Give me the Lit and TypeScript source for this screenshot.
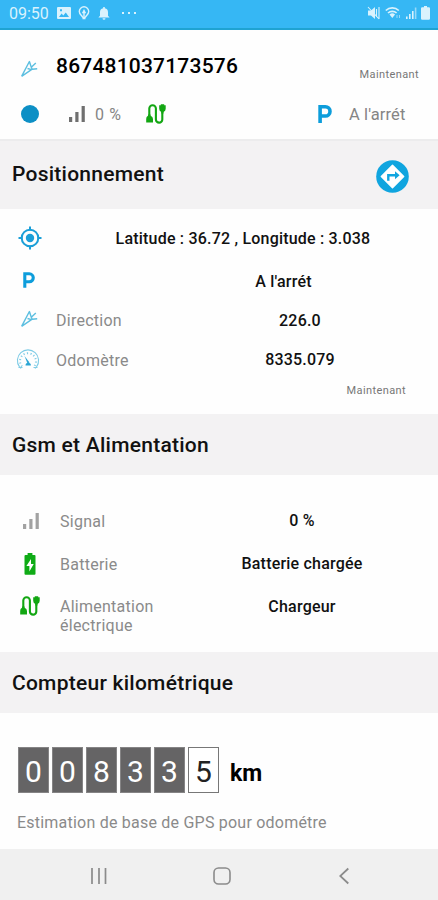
import { LitElement, html, css, svg, nothing } from "lit";
import { customElement, property } from "lit/decorators.js";

const icons: Record<string, { box: string; body: unknown }> = {
  arrow: {
    box: "0 0 18 18",
    body: svg`<path d="M1.600 16.400 9.400 1.500 11.300 7.300 15.800 3M11.300 7.300 12.200 9.200 17.200 8.800M12.200 9.200 1.600 16.400M11.500 9.700 7.500 8.500" fill="none" stroke="#5dbfe0" stroke-width="1.400" stroke-linejoin="round"/>`,
  },
  signal: {
    box: "0 0 18 18",
    body: svg`<path d="M1 12h3.200v5H1zM7.300 7h3.200v10H7.300zM13.600 1h3.200v16h-3.200z" fill="currentColor"/>`,
  },
  plug: {
    box: "0 0 20 20",
    body: svg`<path d="M3.300 14V4.600a3 3 0 0 1 6.600 0V15.400a3.200 3.200 0 0 0 6.400 0V6" fill="none" stroke="#12a612" stroke-width="2.100"/><path d="M2 10.500h2.600v1.300a3.400 3.400 0 0 1 2.400 3.200v3.500H.200V15A3.400 3.400 0 0 1 2 11.800zM13.800 1.300H14.800V.3h3.400v1h1.500v3.500a3.400 3.400 0 0 1-2.200 3.200v1.500h-2.200V8A3.400 3.400 0 0 1 13.200 4.800V1.300z" fill="#12a612"/>`,
  },
  parking: {
    box: "0 0 14 18",
    body: svg`<path d="M2.100 18V1.800H7.400a4.600 4.600 0 0 1 0 9.200H2.100" fill="none" stroke="#0d9ddb" stroke-width="3.600"/>`,
  },
  target: {
    box: "0 0 24 24",
    body: svg`<circle cx="12" cy="12" r="8.300" fill="none" stroke="#1b9fd8" stroke-width="2"/><circle cx="12" cy="12" r="4.200" fill="#1b9fd8"/><path d="M12 .5v4M12 19.500v4M.5 12h4M19.500 12h4" stroke="#1b9fd8" stroke-width="2"/>`,
  },
  gauge: {
    box: "0 0 24 22",
    body: svg`<path d="M5 20.500 3.500 18.800A10.600 10.600 0 1 1 20.500 18.800L19 20.500" fill="none" stroke="#7fcce6" stroke-width="1.100"/><path d="M6 18.500A8 8 0 1 1 18 18.500" fill="none" stroke="#7fcce6" stroke-width="2" stroke-dasharray="1.100 2.300"/><path d="M8.500 8 13.500 14.500 11.500 15.500z" fill="#2ba5d4"/><path d="M9.500 17.500a2.700 2.700 0 0 1 5.400 0z" fill="#2ba5d4"/><path d="M2.500 19.500h4M17.500 19.500h4" stroke="#7fcce6"/>`,
  },
  battery: {
    box: "0 0 12 22",
    body: svg`<path d="M3.600 0h4.800v2H10.500a1 1 0 0 1 1 1V20.800a1 1 0 0 1-1 1h-9a1 1 0 0 1-1-1V3a1 1 0 0 1 1-1H3.600z" fill="#0fab16"/><path d="M7 6 2.400 13H5.400V18.500L9.700 11H7z" fill="#fff"/>`,
  },
  directions: {
    box: "0 0 33 33",
    body: svg`<circle cx="16.500" cy="16.500" r="16.300" fill="#10a5df"/><path d="M16.500 5.300 27.700 16.500 16.500 27.700 5.300 16.500z" fill="#fff" stroke="#fff" stroke-width="1.400" stroke-linejoin="round"/><path d="M12.300 20.800V15.200H20" fill="none" stroke="#10a5df" stroke-width="2.400"/><path d="M19 11.200 23.600 15.200 19 19.200z" fill="#10a5df"/>`,
  },
  photo: {
    box: "0 0 14 12",
    body: svg`<path fill-rule="evenodd" d="M1 0h12a1 1 0 0 1 1 1v10a1 1 0 0 1-1 1H1a1 1 0 0 1-1-1V1a1 1 0 0 1 1-1zM2 10h10L8.800 5.500 6.300 8.500 4.600 6.600zM3 2.200v2h2v-2z" fill="currentColor"/>`,
  },
  pin: {
    box: "0 0 12 14",
    body: svg`<path d="M6 .8a4.700 4.700 0 0 1 4.700 4.700C10.700 8.300 8.300 9.200 7.500 11h-3C3.700 9.200 1.300 8.300 1.300 5.500A4.700 4.700 0 0 1 6 .8z" fill="none" stroke="currentColor" stroke-width="1.400"/><path d="M6 3 8.200 7.200H6.700V10H5.300V7.200H3.800zM4.500 11h3v2.200h-3z" fill="currentColor"/>`,
  },
  bell: {
    box: "0 0 12 13",
    body: svg`<path d="M5.200 0h1.600v1.200A4 4 0 0 1 10 5.200V8.700L11.600 10.500H.4L2 8.700V5.200a4 4 0 0 1 3.200-4zM4.500 11.300h3a1.500 1.500 0 0 1-3 0z" fill="currentColor"/>`,
  },
  dots: {
    box: "0 0 16 4",
    body: svg`<path d="M1 1h2v2H1zM7 1h2v2H7zM13 1h2v2h-2z" fill="currentColor"/>`,
  },
  mute: {
    box: "0 0 14 14",
    body: svg`<path d="M1 4.500h3L8 1v12L4 9.500H1z" fill="currentColor"/><path d="M1 1 12 13M9.500 3v8M12 1v12" stroke="currentColor" stroke-width="1.100" fill="none"/>`,
  },
  wifi: {
    box: "0 0 16 14",
    body: svg`<path d="M.8 4.500a9.500 9.500 0 0 1 13 0M3 7a6.300 6.300 0 0 1 8.600 0" stroke="currentColor" stroke-width="1.700" fill="none"/><path d="M4.500 8.500a4.200 4.200 0 0 1 5.600 0L7.300 12z" fill="currentColor"/><path d="M12 9v3M14.500 9v3" stroke="currentColor" opacity=".6"/>`,
  },
  cell: {
    box: "0 0 12 12",
    body: svg`<path d="M1 12V9.500h1.600V12zM4 12V7h1.600v5zM7 12V4h1.600v8z" fill="currentColor"/><path d="M9.800 12V.5h1.600V12z" fill="currentColor" opacity=".6"/>`,
  },
  power: {
    box: "0 0 9 14",
    body: svg`<path d="M3 0h3v1.300h1.700A1.200 1.200 0 0 1 9 2.500v10A1.300 1.300 0 0 1 7.700 13.800H1.300A1.300 1.300 0 0 1 0 12.500v-10a1.200 1.200 0 0 1 1.300-1.200H3z" fill="currentColor"/>`,
  },
  recents: {
    box: "0 0 18 18",
    body: svg`<path d="M2 1v16M9 1v16M15.500 1v16" stroke="#8b8b8b" stroke-width="1.700" fill="none"/>`,
  },
  home: {
    box: "0 0 18 18",
    body: svg`<rect x="1" y="1" width="16" height="16" rx="4.500" fill="none" stroke="#8b8b8b" stroke-width="1.600"/>`,
  },
  back: {
    box: "0 0 10 18",
    body: svg`<path d="M9.300 1.500 1.200 9 9.300 16.500" fill="none" stroke="#8b8b8b" stroke-width="1.800"/>`,
  },
};

@customElement("ui-icon")
class UiIcon extends LitElement {
  @property() name = "";
  static styles = css`
    :host { display: block; flex: none; }
    svg { display: block; width: 100%; height: 100%; }
  `;
  render() {
    const icon = icons[this.name];
    return icon ? html`<svg viewBox=${icon.box} aria-hidden="true">${icon.body}</svg>` : nothing;
  }
}

@customElement("app-root")
class AppRoot extends LitElement {
  static styles = css`
    :host {
      display: flex; flex-direction: column; width: 438px; height: 900px;
      background: #fefefe; color: #111; overflow: hidden;
      font-family: Roboto, "Liberation Sans", sans-serif; line-height: 1;
    }
    * { box-sizing: border-box; }
    .status {
      flex: none; height: 30px; display: flex; align-items: center; padding: 0 8px 2px 9px;
      background: #36b7f4; border-bottom: 2px solid #1fa3d2; color: #d9f2fd; font-size: 16px;
    }
    .time { width: 48px; padding-top: 2px; }
    .s-photo { width: 14px; height: 12px; }
    .s-pin { width: 12px; height: 14px; margin-left: 7px; }
    .s-bell { width: 12px; height: 13px; margin-left: 8px; }
    .s-dots { width: 16px; height: 4px; margin-left: 11px; margin-right: auto; }
    .s-mute { width: 14px; height: 14px; }
    .s-wifi { width: 16px; height: 14px; margin-left: 4px; }
    .s-cell { width: 12px; height: 12px; margin-left: 4px; }
    .s-power { width: 9px; height: 14px; margin-left: 4px; }

    .device { flex: none; height: 109px; display: flex; flex-direction: column; padding: 18px 0 0; }
    .line { display: flex; align-items: center; }
    .first { height: 36px; }
    .first .arrow { width: 18px; height: 18px; margin: 6px 0 0 20px; }
    .serial { margin: 0 auto 0 18px; font-size: 21px; font-weight: 500; letter-spacing: .2px; color: #000; }
    .now { font-size: 11px; color: #777; letter-spacing: .4px; }
    .first .now { margin: 17px 19px 0 0; }
    .second { height: 34px; margin-top: 13px; color: #858585; font-size: 16px; }
    .dot { width: 18px; height: 18px; border-radius: 50%; background: #0d8fc5; margin-left: 21px; }
    .second .signal { width: 18px; height: 18px; margin-left: 29px; color: #6f6f6f; }
    .second .pct { margin-left: 9px; width: 27px; letter-spacing: .7px; padding-top: 2px; white-space: nowrap; }
    .second .plug { width: 20px; height: 20px; margin-left: 24px; }
    .second .parking { width: 14px; height: 18px; margin-left: auto; }
    .second .state { width: 89px; margin-left: 17px; letter-spacing: .1px; font-size: 16.500px; padding-top: 2px; }

    .bar {
      flex: none; height: 61px; display: flex; align-items: center; justify-content: space-between;
      padding: 2px 29px 0 12px; background: #f3f2f3;
      font-size: 21px; font-weight: 500; letter-spacing: .25px;
    }
    .bar.tall { height: 70px; padding-top: 0; border-top: 2px solid #ececed; }
    .bar.tall span { margin-bottom: 1px; }
    .go { width: 33px; height: 33px; margin-top: 2px; }

    .rows { flex: none; display: grid; }
    .position { height: 205px; padding-top: 9px; grid-template-rows: 40px 45px 33px 46px 15px; }
    .gsm { height: 177px; padding-top: 24px; grid-template-rows: 43px 43px 56px; }
    .row { display: flex; align-items: center; font-size: 16px; }
    .slot { width: 56px; flex: none; display: flex; }
    .gsm .slot { width: 60px; }
    .slot .target { width: 24px; height: 24px; margin-left: 18px; }
    .slot .parking { width: 12px; height: 16px; margin: -2px 0 0 23px; }
    .slot .arrow { width: 18px; height: 18px; margin: -2px 0 0 20px; }
    .slot .gauge { width: 24px; height: 22px; margin-left: 16px; }
    .slot .signal { width: 18px; height: 18px; margin-left: 22px; color: #a2a2a2; }
    .slot .battery { width: 12px; height: 22px; margin-left: 24px; }
    .slot .plug { width: 20px; height: 20px; margin-left: 20px; }
    .label { width: 132px; flex: none; padding-top: 2px; color: #8a8a8a; letter-spacing: .25px; line-height: 19px; }
    .value { width: 224px; padding-top: 2px; text-align: center; font-weight: 500; font-size: 16px; letter-spacing: .2px; white-space: nowrap; }
    .gsm .label { width: 130px; padding-top: 1px; }
    .gsm .value { padding-top: 1px; }
    .value.coords { width: 374px; }
    .value.state { width: 455px; margin-right: -73px; }
    .position .now { text-align: right; padding-right: 32px; line-height: 17px; }
    .row.top { align-items: flex-start; padding-top: 11px; }
    .row.top .value { line-height: 19px; }

    .meter { flex: 1; padding: 34px 0 0 18px; }
    .digits { display: flex; gap: 3px; height: 46px; }
    .digit {
      width: 31px; display: flex; align-items: center; justify-content: center; padding-top: 3px;
      background: #656465; border: 1px solid #858485; color: #fff; font-size: 30px;
    }
    .digit.last { background: #fff; color: #222; border-color: #777; }
    .unit { margin: 15px 0 0 8px; font-size: 23px; font-weight: 700; color: #000; }
    .note { margin: 22px 0 0 -1px; font-size: 16px; color: #8a8a8a; letter-spacing: .22px; }

    .nav { flex: none; height: 51px; display: flex; align-items: center; background: #f0f0f0; padding: 2px 0 0 90px; }
    .recents { width: 18px; height: 18px; }
    .home { width: 18px; height: 18px; margin-left: 105px; }
    .back { width: 10px; height: 18px; margin-left: 108px; }
  `;

  private icon(name: string, cls = name) {
    return html`<ui-icon class=${cls} name=${name}></ui-icon>`;
  }

  private row(icon: string, label: string, value: string, cls = "") {
    return html`<div class="row ${cls}">
      <div class="slot">${this.icon(icon)}</div>
      <div class="label">${label}</div>
      <div class="value">${value}</div>
    </div>`;
  }

  render() {
    return html`
      <div class="status">
        <span class="time">09:50</span>
        ${["photo", "pin", "bell", "dots", "mute", "wifi", "cell", "power"].map((n) => this.icon(n, "s-" + n))}
      </div>
      <div class="device">
        <div class="line first">
          ${this.icon("arrow")}<span class="serial">867481037173576</span><span class="now">Maintenant</span>
        </div>
        <div class="line second">
          <span class="dot"></span>${this.icon("signal")}<span class="pct">0 %</span>${this.icon("plug")}
          ${this.icon("parking")}<span class="state">A l'arrét</span>
        </div>
      </div>
      <div class="bar tall"><span>Positionnement</span>${this.icon("directions", "go")}</div>
      <div class="rows position">
        <div class="row"><div class="slot">${this.icon("target")}</div><div class="value coords">Latitude : 36.72 , Longitude : 3.038</div></div>
        <div class="row"><div class="slot">${this.icon("parking")}</div><div class="value state">A l'arrét</div></div>
        ${this.row("arrow", "Direction", "226.0")}
        ${this.row("gauge", "Odomètre", "8335.079")}
        <div class="now">Maintenant</div>
      </div>
      <div class="bar"><span>Gsm et Alimentation</span></div>
      <div class="rows gsm">
        ${this.row("signal", "Signal", "0 %")}
        ${this.row("battery", "Batterie", "Batterie chargée")}
        ${this.row("plug", "Alimentation électrique", "Chargeur", "top")}
      </div>
      <div class="bar"><span>Compteur kilométrique</span></div>
      <div class="meter">
        <div class="digits">
          ${[..."008335"].map((d, i) => html`<span class="digit ${i === 5 ? "last" : ""}">${d}</span>`)}
          <span class="unit">km</span>
        </div>
        <div class="note">Estimation de base de GPS pour odométre</div>
      </div>
      <div class="nav">${this.icon("recents")}${this.icon("home")}${this.icon("back")}</div>
    `;
  }
}
